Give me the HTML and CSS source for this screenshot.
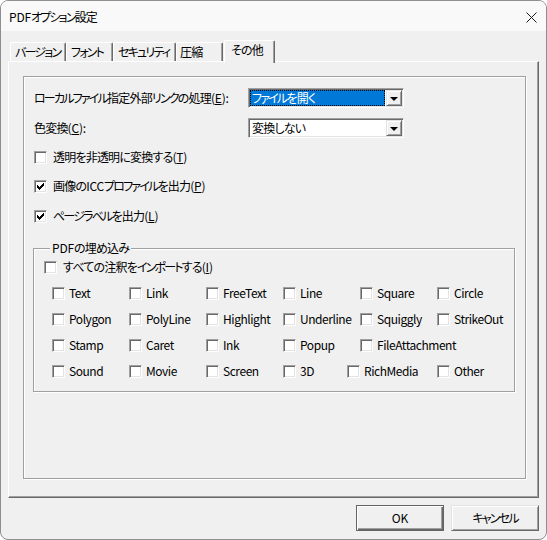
FILE: index.html
```html
<!DOCTYPE html>
<html lang="ja">
<head>
<meta charset="utf-8">
<title>PDFオプション設定</title>
<link rel="stylesheet" href="styles.css">
</head>
<body>
<div class="window">
  <div class="titlebar">
    <span class="title"><span class="m">PDF</span><span class="k">オプション</span>設定</span>
    <svg class="close" width="11" height="11" viewBox="0 0 11 11"><path d="M0.5 0.5L10.5 10.5M10.5 0.5L0.5 10.5" stroke="#1a1a1a" stroke-width="1" fill="none"/></svg>
  </div>
  <div class="client">
    <div class="tabs">
      <div class="tab w1"><span class="k">バージョン</span></div>
      <div class="tab w2"><span class="k">フォント</span></div>
      <div class="tab w3"><span class="k">セキュリティ</span></div>
      <div class="tab w4">圧縮</div>
      <div class="tab sel">その他</div>
    </div>
    <div class="panel">
      <div class="box">
        <div class="row">
          <span class="lbl"><span class="k">ローカルファイル</span>指定外部<span class="k">リンク</span>の処理<span class="m">(<u>E</u>):</span></span>
          <div class="combo focus"><div class="val"><span class="k">ファイル</span>を開く</div><div class="dd"><i class="arrow"></i></div></div>
        </div>
        <div class="row r2">
          <span class="lbl">色変換<span class="m">(<u>C</u>):</span></span>
          <div class="combo"><div class="val">変換しない</div><div class="dd"><i class="arrow"></i></div></div>
        </div>
        <div class="row chk r3"><span class="cb"></span><span class="txt">透明を非透明に変換する<span class="m">(<u>T</u>)</span></span></div>
        <div class="row chk r4"><span class="cb"><svg width="11" height="11" viewBox="0 0 11 11"><path d="M2 4h1v3H2z M3 5h1v3H3z M4 6h1v3H4z M5 5h1v3H5z M6 4h1v3H6z M7 3h1v3H7z M8 2h1v3H8z" fill="#000"/></svg></span><span class="txt">画像の<span class="m">ICC</span><span class="k">プロファイル</span>を出力<span class="m">(<u>P</u>)</span></span></div>
        <div class="row chk r5"><span class="cb"><svg width="11" height="11" viewBox="0 0 11 11"><path d="M2 4h1v3H2z M3 5h1v3H3z M4 6h1v3H4z M5 5h1v3H5z M6 4h1v3H6z M7 3h1v3H7z M8 2h1v3H8z" fill="#000"/></svg></span><span class="txt"><span class="k">ページラベル</span>を出力<span class="m">(<u>L</u>)</span></span></div>
        <fieldset class="group">
          <legend><span class="m">PDF</span>の埋め込み</legend>
          <div class="row chk"><span class="cb"></span><span class="txt">すべての注釈を<span class="k">インポート</span>する<span class="m">(<u>I</u>)</span></span></div>
          <div class="grid">
            <div class="item"><span class="cb"></span><span class="txt">Text</span></div>
            <div class="item"><span class="cb"></span><span class="txt">Link</span></div>
            <div class="item"><span class="cb"></span><span class="txt">FreeText</span></div>
            <div class="item"><span class="cb"></span><span class="txt">Line</span></div>
            <div class="item"><span class="cb"></span><span class="txt">Square</span></div>
            <div class="item"><span class="cb"></span><span class="txt">Circle</span></div>
            <div class="item"><span class="cb"></span><span class="txt">Polygon</span></div>
            <div class="item"><span class="cb"></span><span class="txt">PolyLine</span></div>
            <div class="item"><span class="cb"></span><span class="txt">Highlight</span></div>
            <div class="item"><span class="cb"></span><span class="txt">Underline</span></div>
            <div class="item"><span class="cb"></span><span class="txt">Squiggly</span></div>
            <div class="item"><span class="cb"></span><span class="txt">StrikeOut</span></div>
            <div class="item"><span class="cb"></span><span class="txt">Stamp</span></div>
            <div class="item"><span class="cb"></span><span class="txt">Caret</span></div>
            <div class="item"><span class="cb"></span><span class="txt">Ink</span></div>
            <div class="item"><span class="cb"></span><span class="txt">Popup</span></div>
            <div class="item span2"><span class="cb"></span><span class="txt">FileAttachment</span></div>
            <div class="item"><span class="cb"></span><span class="txt">Sound</span></div>
            <div class="item"><span class="cb"></span><span class="txt">Movie</span></div>
            <div class="item"><span class="cb"></span><span class="txt">Screen</span></div>
            <div class="item"><span class="cb"></span><span class="txt">3D</span></div>
            <div class="item shift"><span class="cb"></span><span class="txt">RichMedia</span></div>
            <div class="item"><span class="cb"></span><span class="txt">Other</span></div>
          </div>
        </fieldset>
      </div>
    </div>
    <div class="buttons">
      <div class="button default"><span class="m">OK</span></div>
      <div class="button"><span class="k">キャンセル</span></div>
    </div>
  </div>
</div>
</body>
</html>
```

FILE: styles.css
```css
html, body {
  margin: 0;
  padding: 0;
  background: #ffffff;
}
body {
  font-family: "Noto Sans CJK JP", sans-serif;
  font-size: 12px;
  line-height: 16px;
  color: #000;
  font-feature-settings: "palt";
  letter-spacing: -0.8px;
  white-space: nowrap;
}
.k {
  letter-spacing: -1.8px;
}
.m {
  letter-spacing: -0.2px;
}
.window {
  box-sizing: border-box;
  width: 547px;
  height: 540px;
  border: 1px solid #8f8f8f;
  border-radius: 8px;
  overflow: hidden;
  background: #f0f0f0;
  display: flex;
  flex-direction: column;
}
.titlebar {
  height: 30px;
  flex: none;
  background: #f9f9f9;
  display: flex;
  align-items: center;
  justify-content: space-between;
  padding: 0 9px 0 8px;
}
.title {
  padding-top: 1px;
}
.close {
  display: block;
  margin-top: 2px;
}
.client {
  flex: 1;
  display: flex;
  flex-direction: column;
  padding: 0 7px;
}
.tabs {
  height: 30px;
  flex: none;
  display: flex;
  align-items: flex-end;
  padding-left: 2px;
}
.tab {
  box-sizing: border-box;
  height: 19px;
  border-top: 1px solid #fff;
  border-left: 1px solid #fff;
  border-right: 1px solid #696969;
  border-radius: 2px 2px 0 0;
  box-shadow: inset -1px 0 0 #a0a0a0;
  padding-left: 4px;
  line-height: 17px;
}
.w1 { width: 56px; }
.w2 { width: 47px; }
.w3 { width: 63px; }
.w4 { width: 47px; padding-left: 3px; }
.tab.sel {
  width: 51px;
  height: 23px;
  margin-bottom: -2px;
  margin-left: 1px;
  padding-left: 6px;
  position: relative;
  z-index: 1;
  background: #f0f0f0;
  line-height: 18px;
}
.panel {
  box-sizing: border-box;
  height: 437px;
  flex: none;
  border-top: 1px solid #fff;
  border-left: 1px solid #fff;
  border-right: 1px solid #696969;
  border-bottom: 1px solid #696969;
  box-shadow: inset -1px -1px 0 #a0a0a0;
  padding: 14px 15px 18px 14px;
  display: flex;
}
.box {
  flex: 1;
  border: 1px solid #a0a0a0;
  box-shadow: inset 1px 1px 0 #fff, 1px 1px 0 #fff;
  padding: 11px 10px 0 10px;
}
.row {
  display: flex;
  align-items: center;
  height: 20px;
}
.lbl {
  width: 214px;
  flex: none;
}
.r2 { margin-top: 10px; }
.r3 { margin-top: 9px; }
.r4 { margin-top: 9px; }
.r5 { margin-top: 10px; }
.combo {
  box-sizing: border-box;
  width: 156px;
  height: 20px;
  display: flex;
  background: #fff;
  border-top: 1px solid #a0a0a0;
  border-left: 1px solid #a0a0a0;
  border-right: 1px solid #fff;
  border-bottom: 1px solid #fff;
  box-shadow: inset 1px 1px 0 #696969, inset -1px -1px 0 #e3e3e3;
  padding: 1px;
}
.val {
  flex: 1;
  line-height: 16px;
  padding-left: 2px;
}
.combo.focus .val {
  background: #0078d7;
  color: #fff;
  outline: 1px dotted #000;
  outline-offset: -1px;
  margin-right: 1px;
}
.dd {
  box-sizing: border-box;
  width: 16px;
  height: 16px;
  background: #f0f0f0;
  border-top: 1px solid #e3e3e3;
  border-left: 1px solid #e3e3e3;
  border-right: 1px solid #696969;
  border-bottom: 1px solid #696969;
  box-shadow: inset 1px 1px 0 #fff, inset -1px -1px 0 #a0a0a0;
  display: flex;
  align-items: center;
  justify-content: center;
}
.arrow {
  display: block;
  width: 0;
  height: 0;
  border-left: 4px solid transparent;
  border-right: 4px solid transparent;
  border-top: 4px solid #000;
  margin-top: 1px;
}
.cb {
  box-sizing: border-box;
  width: 13px;
  height: 13px;
  flex: none;
  background: #fff;
  border-top: 1px solid #a0a0a0;
  border-left: 1px solid #a0a0a0;
  border-right: 1px solid #fff;
  border-bottom: 1px solid #fff;
  box-shadow: inset 1px 1px 0 #696969, inset -1px -1px 0 #e3e3e3;
}
.cb svg {
  display: block;
}
.chk .txt {
  margin-left: 6px;
}
.group {
  margin: 14px 0 0 -1px;
  width: 482px;
  box-sizing: border-box;
  border: 1px solid #a0a0a0;
  box-shadow: inset 1px 1px 0 #fff, 1px 1px 0 #fff;
  padding: 1px 0 7px 10px;
  min-width: 0;
}
.group legend {
  margin-left: 6px;
  padding: 0 2px;
  line-height: 16px;
  background: #f0f0f0;
}
.grid {
  margin: 3px 0 0 8px;
  display: grid;
  grid-template-columns: repeat(6, 77px);
  grid-auto-rows: 26px;
}
.item {
  display: flex;
  align-items: center;
}
.item .txt {
  margin-left: 4px;
  letter-spacing: -0.45px;
}
.span2 {
  grid-column: span 2;
}
.shift {
  margin-left: -13px;
}
.buttons {
  display: flex;
  justify-content: flex-end;
  gap: 7px;
  margin-top: 7px;
}
.button {
  box-sizing: border-box;
  width: 88px;
  height: 26px;
  text-align: center;
  line-height: 23px;
  border-top: 1px solid #e3e3e3;
  border-left: 1px solid #e3e3e3;
  border-right: 1px solid #696969;
  border-bottom: 1px solid #696969;
  box-shadow: inset 1px 1px 0 #fff, inset -1px -1px 0 #a0a0a0;
  background: #f0f0f0;
}
.button.default {
  border: 1px solid #646464;
  box-shadow: inset 1px 1px 0 #fff, inset -1px -1px 0 #696969, inset -2px -2px 0 #a0a0a0;
}
```
